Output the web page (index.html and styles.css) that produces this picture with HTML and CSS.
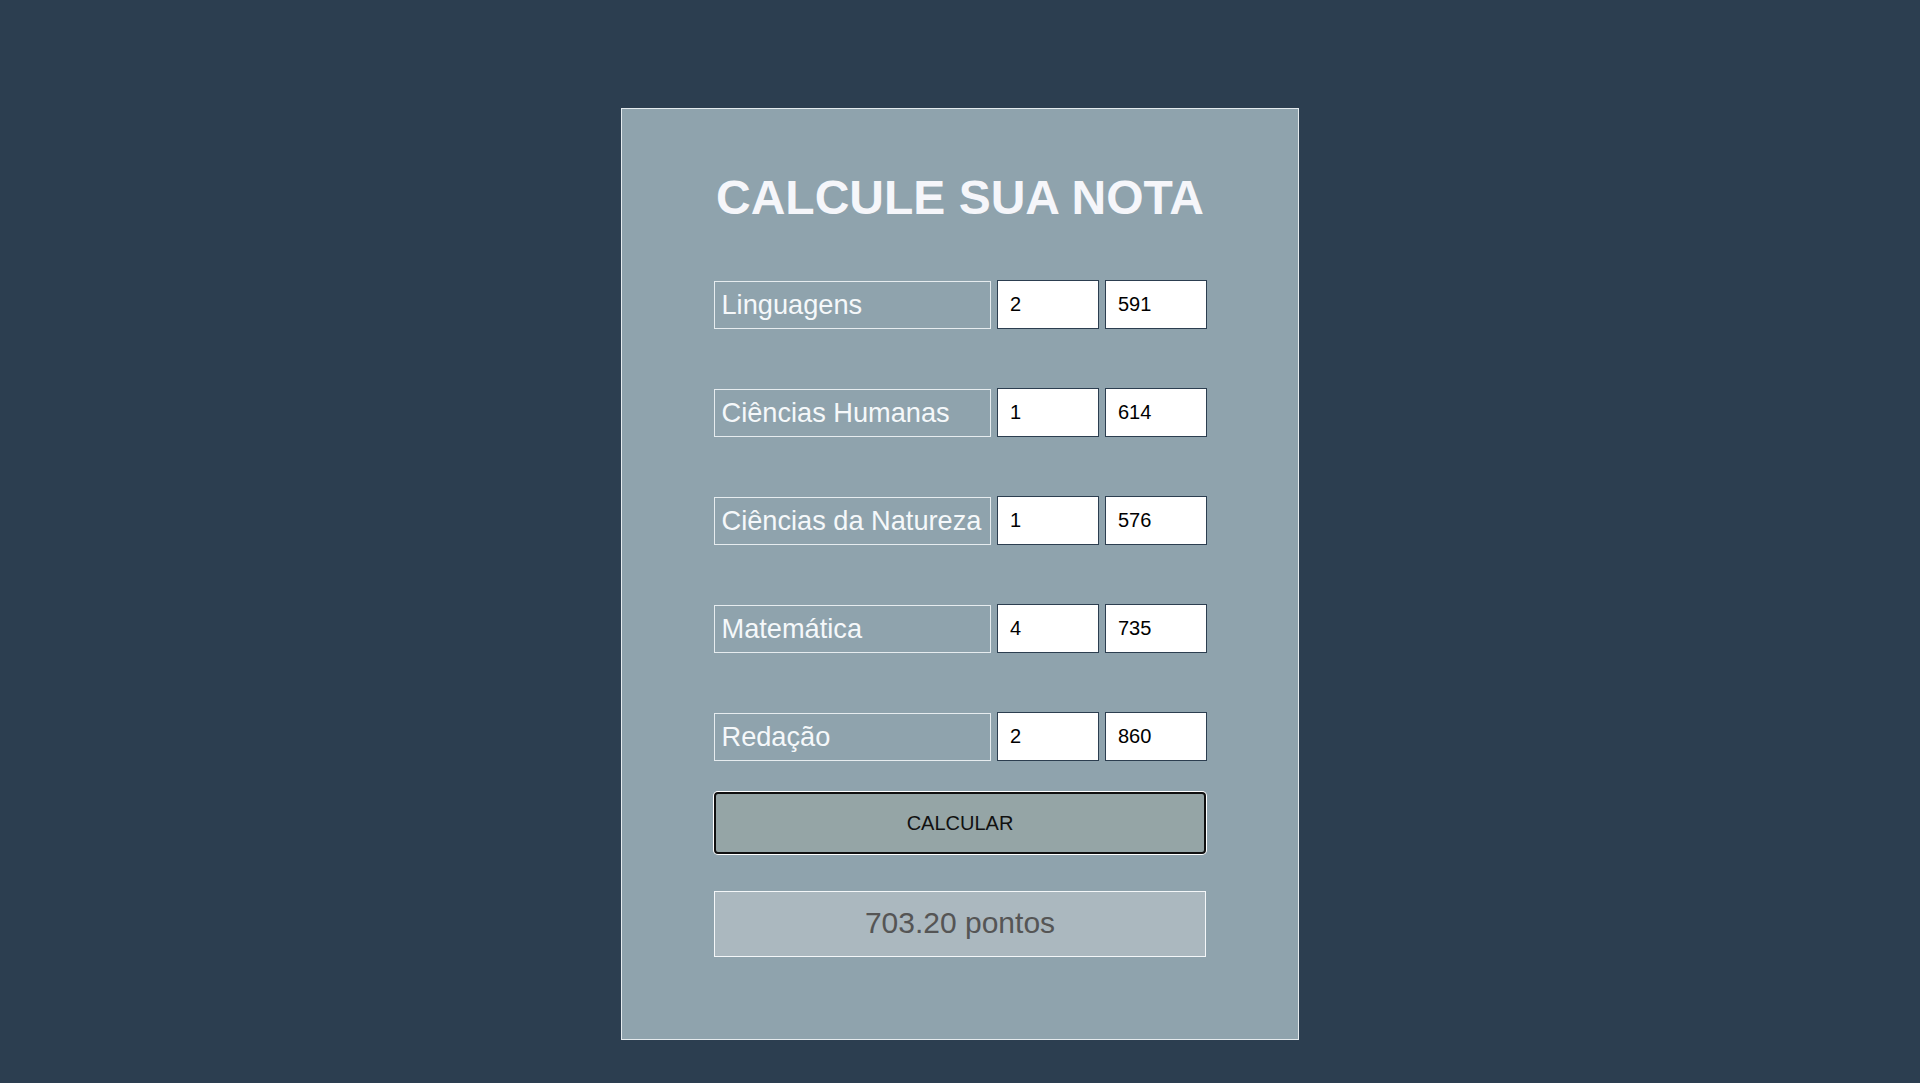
FILE: index.html
```html
<!DOCTYPE html>
<html lang="pt-BR">
<head>
<meta charset="utf-8">
<title>Calcule sua nota</title>
<link rel="stylesheet" href="styles.css">
</head>
<body>
<main class="page">
  <section class="card">
    <h1 class="title">CALCULE SUA NOTA</h1>
    <div class="rows">
      <div class="row">
        <div class="subject">Linguagens</div>
        <input class="field" type="text" value="2">
        <input class="field" type="text" value="591">
      </div>
      <div class="row">
        <div class="subject">Ciências Humanas</div>
        <input class="field" type="text" value="1">
        <input class="field" type="text" value="614">
      </div>
      <div class="row">
        <div class="subject">Ciências da Natureza</div>
        <input class="field" type="text" value="1">
        <input class="field" type="text" value="576">
      </div>
      <div class="row">
        <div class="subject">Matemática</div>
        <input class="field" type="text" value="4">
        <input class="field" type="text" value="735">
      </div>
      <div class="row">
        <div class="subject">Redação</div>
        <input class="field" type="text" value="2">
        <input class="field" type="text" value="860">
      </div>
    </div>
    <button class="calc" type="button">CALCULAR</button>
    <div class="result">703.20 pontos</div>
  </section>
</main>
</body>
</html>
```
FILE: styles.css
```css
html, body {
  margin: 0;
  padding: 0;
}

body {
  background: #2c3e50;
  font-family: "Liberation Sans", Arial, sans-serif;
  min-height: 1083px;
}

.page {
  padding-top: 108px;
  display: flex;
  justify-content: center;
}

.card {
  width: 678px;
  box-sizing: border-box;
  border: 1px solid #e4eaed;
  background: #8fa3ad;
  padding: 61px 0 82px;
  display: flex;
  flex-direction: column;
  align-items: center;
}

.title {
  margin: 0 0 55px;
  font-size: 48px;
  line-height: 55px;
  font-weight: bold;
  color: #f5f6fa;
}

.rows {
  width: 493px;
  display: flex;
  flex-direction: column;
  gap: 59px;
}

.row {
  display: grid;
  grid-template-columns: 277px 101.5px 101.5px;
  column-gap: 6.5px;
  align-items: end;
}

.subject {
  box-sizing: border-box;
  height: 48px;
  border: 1px solid #e6ecef;
  padding: 0 7px 1px;
  display: flex;
  align-items: center;
  font-size: 27.2px;
  color: #f5f8fa;
  white-space: nowrap;
}

.field {
  box-sizing: border-box;
  width: 100%;
  height: 49px;
  margin: 0;
  border: 1px solid #2c3e50;
  border-radius: 0;
  background: #ffffff;
  padding: 0 8px 0 12px;
  font-family: "Liberation Sans", Arial, sans-serif;
  font-size: 20px;
  color: #000;
  outline: none;
}

.calc {
  box-sizing: border-box;
  width: 491.5px;
  height: 62px;
  margin: 31px 0 0;
  padding: 0;
  border: 2px solid #101010;
  border-radius: 4px;
  box-shadow: 0 0 0 1px #ffffff;
  background: #95a5a6;
  font-family: "Liberation Sans", Arial, sans-serif;
  font-size: 20px;
  color: #111;
  cursor: pointer;
}

.result {
  box-sizing: border-box;
  width: 491.5px;
  height: 66px;
  margin-top: 37px;
  border: 1px solid #f4f7f9;
  background: #abb8bf;
  display: flex;
  align-items: center;
  justify-content: center;
  padding-bottom: 2px;
  font-size: 30px;
  color: #555555;
}
```
